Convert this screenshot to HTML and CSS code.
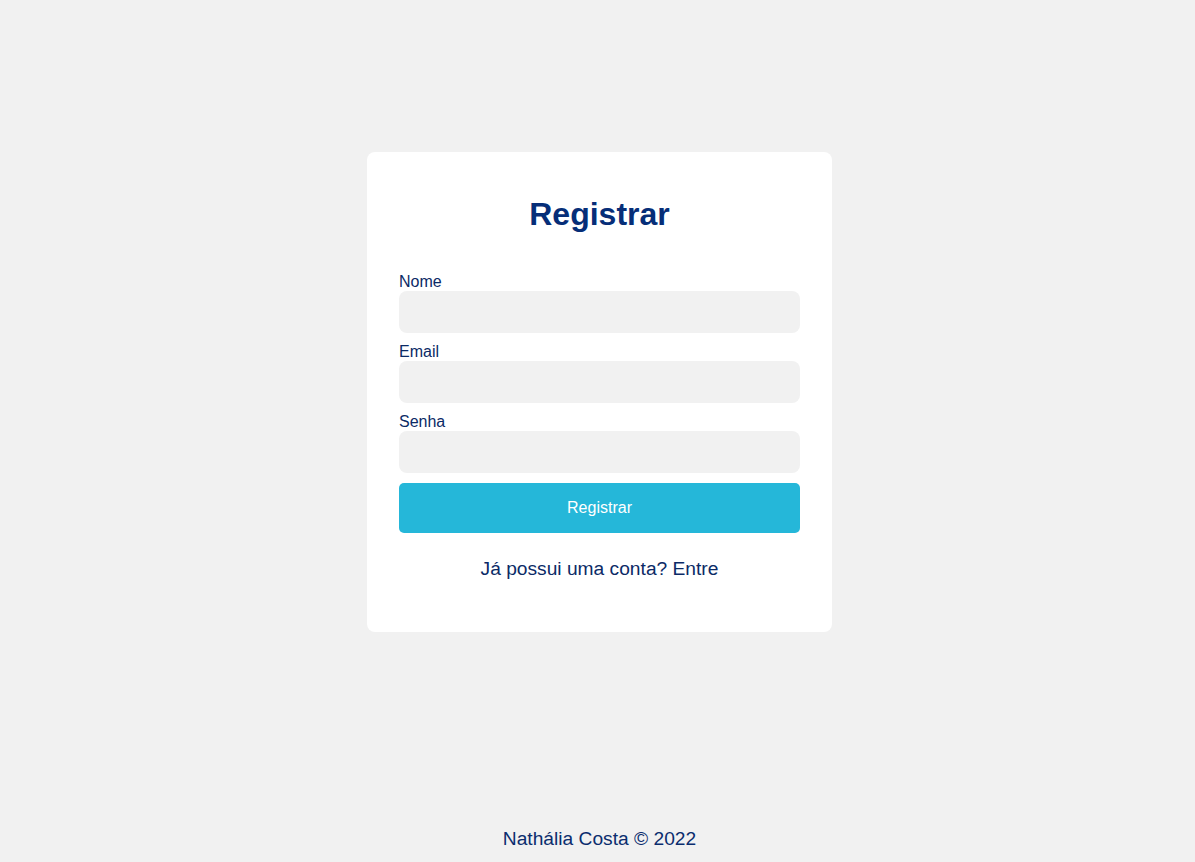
FILE: index.html
```html
<!DOCTYPE html>
<html lang="pt-BR">
<head>
<meta charset="utf-8">
<title>Registrar</title>
<link rel="stylesheet" href="styles.css">
</head>
<body>
<main class="page">
  <form class="card">
    <h1 class="title">Registrar</h1>
    <label class="label" for="nome">Nome</label>
    <input class="input" id="nome" type="text">
    <label class="label" for="email">Email</label>
    <input class="input" id="email" type="email">
    <label class="label" for="senha">Senha</label>
    <input class="input" id="senha" type="password">
    <button class="button" type="button">Registrar</button>
    <p class="switch">Já possui uma conta? <a class="link" href="#">Entre</a></p>
  </form>
</main>
<footer class="footer">Nathália Costa © 2022</footer>
</body>
</html>
```
FILE: styles.css
```css
* { box-sizing: border-box; }
html, body { margin: 0; padding: 0; }
body {
  background: #f1f1f1;
  font-family: "Liberation Sans", Arial, sans-serif;
  color: #0b2d6e;
  height: 862px;
  overflow: hidden;
}
.page {
  height: 784px;
  padding-left: 4px;
  display: flex;
  align-items: center;
  justify-content: center;
}
.card {
  width: 465px;
  background: #ffffff;
  border-radius: 8px;
  padding: 44px 32px 52px;
  display: flex;
  flex-direction: column;
}
.title {
  margin: 0 0 40px;
  font-size: 32px;
  line-height: 37px;
  font-weight: 700;
  text-align: center;
  color: #062e78;
}
.label {
  font-size: 16px;
  line-height: 18px;
  color: #0b2a66;
}
.input {
  height: 42px;
  border: none;
  border-radius: 8px;
  background: #f1f1f1;
  margin: 0 0 10px;
  font-size: 16px;
  padding: 0 12px;
  outline: none;
}
.button {
  height: 50px;
  border: none;
  border-radius: 5px;
  background: #25b7d9;
  color: #ffffff;
  font-family: "Liberation Sans", Arial, sans-serif;
  font-size: 16px;
  margin-top: 0;
}
.switch {
  margin: 24px 0 0;
  font-size: 19.2px;
  line-height: 23px;
  text-align: center;
  color: #0b2a66;
}
.link { color: inherit; text-decoration: none; }
.footer {
  height: 78px;
  padding-top: 43px;
  padding-left: 4px;
  text-align: center;
  font-size: 19.2px;
  line-height: 23px;
  color: #0b2d6e;
}
```
